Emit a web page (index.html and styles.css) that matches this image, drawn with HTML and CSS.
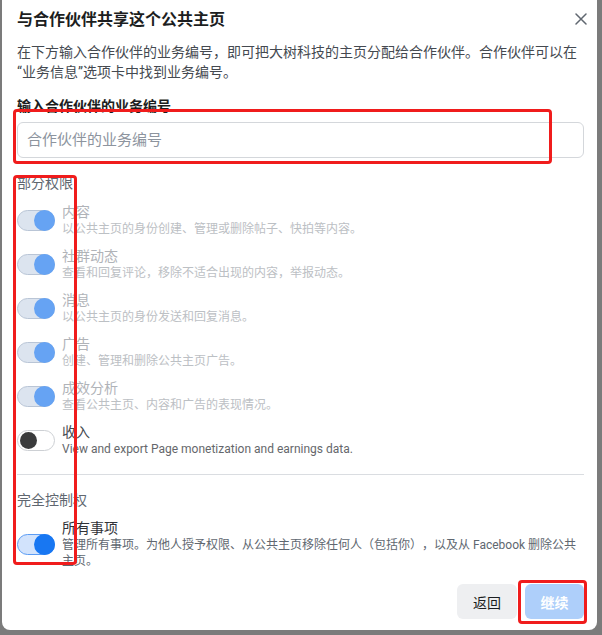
FILE: index.html
```html
<!DOCTYPE html>
<html lang="zh-CN">
<head>
<meta charset="utf-8">
<title>与合作伙伴共享这个公共主页</title>
<link rel="stylesheet" href="styles.css">
</head>
<body>
<div class="dialog">
  <div class="header">
    <h1 class="title">与合作伙伴共享这个公共主页</h1>
    <button class="close" aria-label="关闭">
      <svg width="12" height="12" viewBox="0 0 12 12"><path d="M1 1L11 11M11 1L1 11" stroke="#606770" stroke-width="1.5" stroke-linecap="round" fill="none"/></svg>
    </button>
  </div>
  <p class="intro">在下方输入合作伙伴的业务编号，即可把大树科技的主页分配给合作伙伴。合作伙伴可以在“业务信息”选项卡中找到业务编号。</p>
  <label class="field-label" for="bizid">输入合作伙伴的业务编号</label>
  <input class="field" id="bizid" type="text" placeholder="合作伙伴的业务编号">

  <div class="section-title">部分权限</div>
  <ul class="perm-list">
    <li class="perm disabled">
      <span class="toggle on"><span class="knob"></span></span>
      <div class="perm-text"><div class="perm-name">内容</div><div class="perm-desc">以公共主页的身份创建、管理或删除帖子、快拍等内容。</div></div>
    </li>
    <li class="perm disabled">
      <span class="toggle on"><span class="knob"></span></span>
      <div class="perm-text"><div class="perm-name">社群动态</div><div class="perm-desc">查看和回复评论，移除不适合出现的内容，举报动态。</div></div>
    </li>
    <li class="perm disabled">
      <span class="toggle on"><span class="knob"></span></span>
      <div class="perm-text"><div class="perm-name">消息</div><div class="perm-desc">以公共主页的身份发送和回复消息。</div></div>
    </li>
    <li class="perm disabled">
      <span class="toggle on"><span class="knob"></span></span>
      <div class="perm-text"><div class="perm-name">广告</div><div class="perm-desc">创建、管理和删除公共主页广告。</div></div>
    </li>
    <li class="perm disabled">
      <span class="toggle on"><span class="knob"></span></span>
      <div class="perm-text"><div class="perm-name">成效分析</div><div class="perm-desc">查看公共主页、内容和广告的表现情况。</div></div>
    </li>
    <li class="perm">
      <span class="toggle off"><span class="knob"></span></span>
      <div class="perm-text"><div class="perm-name">收入</div><div class="perm-desc">View and export Page monetization and earnings data.</div></div>
    </li>
  </ul>

  <hr class="divider">

  <div class="section-title">完全控制权</div>
  <div class="perm full">
    <span class="toggle active"><span class="knob"></span></span>
    <div class="perm-text"><div class="perm-name">所有事项</div><div class="perm-desc">管理所有事项。为他人授予权限、从公共主页移除任何人（包括你），以及从 Facebook 删除公共主页。</div></div>
  </div>

  <div class="footer">
    <button class="btn back">返回</button>
    <button class="btn primary">继续</button>
  </div>
</div>

<div class="mark mark-input"></div>
<div class="mark mark-toggles"></div>
<div class="mark mark-continue"></div>
</body>
</html>
```

FILE: styles.css
```css
html, body {
  margin: 0;
  padding: 0;
}

body {
  background: #7b7b7b;
  font-family: Roboto, "Noto Sans CJK SC", sans-serif;
  color: #1c1e21;
  height: 635px;
  overflow: hidden;
  text-spacing-trim: space-all;
}

.dialog {
  margin-left: 2px;
  width: 595px;
  height: 630px;
  box-sizing: border-box;
  background: #ffffff;
  border-radius: 0 0 8px 8px;
  padding: 10px 13px 0 15px;
}

.header {
  display: flex;
  align-items: center;
  justify-content: space-between;
  height: 20px;
}

.title {
  margin: 0;
  font-size: 16px;
  font-weight: 700;
  line-height: 20px;
  color: #1c1e21;
}

.close {
  border: 0;
  background: none;
  padding: 0;
  width: 12px;
  height: 12px;
  margin: -3px -3px 0 0;
  display: flex;
}

.intro {
  margin: 12px 0 0;
  font-size: 14px;
  line-height: 20px;
  color: #444950;
}

.field-label {
  display: block;
  margin-top: 14px;
  font-size: 14px;
  font-weight: 700;
  line-height: 20px;
  color: #1c1e21;
}

.field {
  display: block;
  margin-top: 6px;
  width: 100%;
  height: 36px;
  box-sizing: border-box;
  border: 1px solid #d4d7db;
  border-radius: 6px;
  padding: 0 9px;
  font-family: Roboto, "Noto Sans CJK SC", sans-serif;
  font-size: 15px;
  color: #1c1e21;
  outline: none;
}

.field::placeholder {
  color: #8d949e;
}

.section-title {
  margin-top: 15px;
  font-size: 14px;
  line-height: 20px;
  color: #606770;
}

.perm-list {
  list-style: none;
  margin: 10px 0 0;
  padding: 0;
  display: flex;
  flex-direction: column;
  gap: 9px;
}

.perm {
  display: flex;
  align-items: center;
  gap: 7px;
}

.perm-name {
  font-size: 14px;
  line-height: 18px;
  color: #444950;
}

.perm-desc {
  font-size: 12px;
  line-height: 17px;
  color: #65676b;
}

.perm.disabled .perm-name {
  color: #b0b3b8;
}

.perm.disabled .perm-desc {
  color: #bcc0c4;
}

.toggle {
  flex: none;
  width: 38px;
  height: 21px;
  box-sizing: border-box;
  border-radius: 11px;
  border: 1px solid #c9cdd2;
  display: flex;
  align-items: center;
}

.knob {
  display: block;
  border-radius: 50%;
}

.toggle.on {
  background: #dce4ef;
  border-color: #b9c5d6;
  justify-content: flex-end;
}

.toggle.on .knob {
  width: 21px;
  height: 21px;
  margin: -1px;
  background: #66a3f3;
}

.toggle.off {
  background: #ffffff;
  border-color: #cdd0d4;
  justify-content: flex-start;
  padding-left: 2px;
}

.toggle.off .knob {
  width: 17px;
  height: 17px;
  background: #3a3b3c;
}

.toggle.active {
  background: #d2e3fc;
  border-color: #5b9cf4;
  justify-content: flex-end;
}

.toggle.active .knob {
  width: 21px;
  height: 21px;
  margin: -1px;
  background: #1877f2;
}

.divider {
  margin: 16px 0 0;
  border: 0;
  border-top: 1px solid #dadde1;
  height: 0;
}

.perm.full {
  margin-top: 9px;
}

.perm.full .perm-name {
  color: #303338;
}

.perm.full .perm-desc {
  line-height: 16px;
  color: #606770;
}

.footer {
  display: flex;
  justify-content: flex-end;
  gap: 8px;
  margin-top: 15px;
}

.btn {
  height: 35px;
  border: 0;
  border-radius: 6px;
  font-family: Roboto, "Noto Sans CJK SC", sans-serif;
  font-size: 14px;
  padding: 0;
}

.btn.back {
  width: 60px;
  background: #eeeff1;
  color: #1c1e21;
}

.btn.primary {
  width: 59px;
  background: #aecffa;
  color: #ffffff;
  font-weight: 700;
}

.mark {
  position: absolute;
  box-sizing: border-box;
  border: 3px solid #f01c1c;
  border-radius: 4px;
}

.mark-input {
  left: 13px;
  top: 109px;
  width: 539px;
  height: 55px;
}

.mark-toggles {
  left: 13px;
  top: 175px;
  width: 64px;
  height: 390px;
}

.mark-continue {
  left: 518px;
  top: 580px;
  width: 69px;
  height: 44px;
}
```
